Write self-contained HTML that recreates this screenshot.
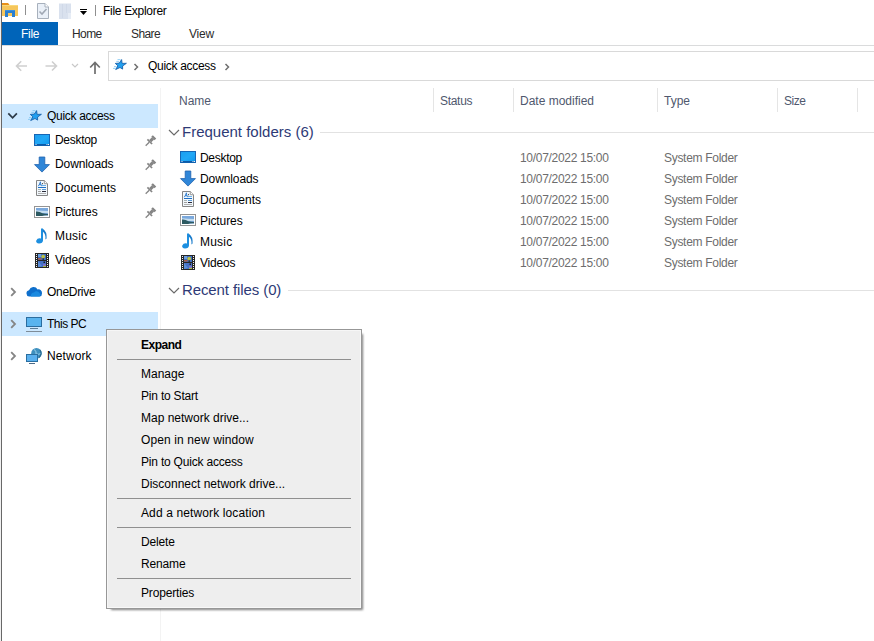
<!DOCTYPE html>
<html><head><meta charset="utf-8">
<style>
html,body{margin:0;padding:0;}
body{width:874px;height:641px;overflow:hidden;position:relative;background:#fff;font-family:"Liberation Sans",sans-serif;font-size:12px;color:#000;}
.a{position:absolute;}
.t{position:absolute;white-space:pre;line-height:14px;}
svg{position:absolute;overflow:visible;}
.hd{color:#4f586e;}
.gr{color:#6d6d6d;letter-spacing:-0.3px;}
.mi{position:absolute;left:141px;white-space:pre;line-height:14px;color:#000;}
.sep{position:absolute;left:117px;width:234px;height:1px;background:#8f8f8f;}
</style></head><body>
<!-- left window border -->
<div class="a" style="left:0;top:0;width:1px;height:641px;background:#f0f0f0"></div>
<div class="a" style="left:1px;top:0;width:1px;height:641px;background:#686868"></div>

<!-- ===== title bar ===== -->
<svg width="18" height="18" style="left:2px;top:2px" viewBox="0 0 18 18">
  <path d="M0 1.5 H6 L7.5 3 H16 V14 H0 Z" fill="#f6c65b"/>
  <path d="M0 1 H6 L7.5 3 H0 Z" fill="#e8901a"/>
  <path d="M0 3 H16 V4 H0 Z" fill="#f9d87a"/>
  <path d="M3 8 H13 V15 H10 V11 H6 V15 H3 Z" fill="#2a7fd0"/>
  <path d="M3 8 H13 V9 H3 Z" fill="#3a90e0"/>
</svg>
<div class="a" style="left:25px;top:5px;width:1px;height:10px;background:#8f8f8f"></div>
<svg width="14" height="17" style="left:36px;top:3px" viewBox="0 0 14 17">
  <path d="M1.5 0.5 H9 L12.5 4 V15.5 H1.5 Z" fill="#eaf0f8" stroke="#a7b0bc" stroke-width="1"/>
  <path d="M9 0.5 V4 H12.5" fill="#fff" stroke="#a7b0bc" stroke-width="1"/>
  <path d="M3.5 8.5 L6 11 L10.5 6" fill="none" stroke="#a0a8b4" stroke-width="1.6"/>
</svg>
<svg width="14" height="17" style="left:58px;top:3px" viewBox="0 0 14 17">
  <rect x="1" y="0.5" width="12" height="15.5" fill="#d9e1ee"/>
  <path d="M4.5 1 V15 M8.5 1 V10" stroke="#d0d9e8" stroke-width="1"/>
  <rect x="10" y="10" width="3" height="6" fill="#e6ecf5"/>
</svg>
<svg width="8" height="7" style="left:80px;top:9px" viewBox="0 0 8 7">
  <rect x="0" y="0" width="7" height="1" fill="#000"/>
  <path d="M0 2 H7 L3.5 6 Z" fill="#000"/>
</svg>
<div class="a" style="left:95px;top:5px;width:1px;height:11px;background:#8f8f8f"></div>
<div class="t" style="left:103px;top:4px;letter-spacing:-0.3px">File Explorer</div>

<!-- ===== ribbon tabs ===== -->
<div class="a" style="left:2px;top:22px;width:56px;height:23px;background:#0064b9"></div>
<div class="t" style="left:21px;top:27px;color:#fff;letter-spacing:-0.3px">File</div>
<div class="t" style="left:72px;top:27px;color:#2b2b2b;letter-spacing:-0.6px">Home</div>
<div class="t" style="left:131px;top:27px;color:#2b2b2b;letter-spacing:-0.6px">Share</div>
<div class="t" style="left:189px;top:27px;color:#2b2b2b;letter-spacing:-0.2px">View</div>
<div class="a" style="left:2px;top:45px;width:872px;height:1px;background:#dadbdc"></div>

<!-- ===== address row ===== -->
<svg width="14" height="12" style="left:15px;top:60px" viewBox="0 0 14 12">
  <path d="M12 6 H2 M6.2 1.3 L1.5 6 L6.2 10.7" fill="none" stroke="#cfcfcf" stroke-width="1.6"/>
</svg>
<svg width="14" height="12" style="left:44px;top:60px" viewBox="0 0 14 12">
  <path d="M1.5 6 H12 M8 1.5 L12.5 6 L8 10.5" fill="none" stroke="#cfcfcf" stroke-width="1.6"/>
</svg>
<svg width="8" height="5" style="left:71px;top:63px" viewBox="0 0 8 5">
  <path d="M1 1 L4 4 L7 1" fill="none" stroke="#c8c8c8" stroke-width="1.2"/>
</svg>
<svg width="12" height="13" style="left:89px;top:61px" viewBox="0 0 12 13">
  <path d="M6 2 V13 M1.2 6.5 L6 1.5 L10.8 6.5" fill="none" stroke="#6f6f6f" stroke-width="1.7"/>
</svg>
<div class="a" style="left:108px;top:51px;width:800px;height:28px;border:1px solid #d9d9d9"></div>
<svg width="17" height="15" style="left:112px;top:57px" viewBox="0 0 17 15">
  <path d="M9.6 2.6 L10.1 6.4 L14.4 6.3 L10.6 9 L10.6 12.1 L8 10.5 L3.7 12.5 L5.9 8.8 L3.3 6.4 L7.3 6.1 Z" fill="#22a0f0" stroke="#1a62aa" stroke-width="0.9" stroke-linejoin="round"/>
  <path d="M5.5 2.6 H8.5 M4.3 4.4 H7 M2 9.6 H4.5 M1 11.4 H3.6" stroke="#7cc4f2" stroke-width="0.8"/>
</svg>
<svg width="6" height="8" style="left:133px;top:63px" viewBox="0 0 6 8">
  <path d="M1.5 1 L4.5 4 L1.5 7" fill="none" stroke="#707070" stroke-width="1.5"/>
</svg>
<div class="t" style="left:148px;top:59px;letter-spacing:-0.3px">Quick access</div>
<svg width="6" height="8" style="left:224px;top:63px" viewBox="0 0 6 8">
  <path d="M1.5 1 L4.5 4 L1.5 7" fill="none" stroke="#707070" stroke-width="1.5"/>
</svg>

<!-- ===== nav pane ===== -->
<div class="a" style="left:2px;top:104px;width:156px;height:24px;background:#cce8ff"></div>
<div class="a" style="left:2px;top:312px;width:156px;height:24px;background:#cce8ff"></div>
<div class="a" style="left:160px;top:88px;width:1px;height:553px;background:#f3f3f3"></div>

<svg width="12" height="8" style="left:7px;top:112px" viewBox="0 0 12 8">
  <path d="M1.3 1.3 L5.6 5.8 L9.9 1.3" fill="none" stroke="#2c3a48" stroke-width="1.7"/>
</svg>
<svg width="17" height="15" style="left:27px;top:108px" viewBox="0 0 17 15">
  <path d="M9.6 2.6 L10.1 6.4 L14.4 6.3 L10.6 9 L10.6 12.1 L8 10.5 L3.7 12.5 L5.9 8.8 L3.3 6.4 L7.3 6.1 Z" fill="#22a0f0" stroke="#1a62aa" stroke-width="0.9" stroke-linejoin="round"/>
  <path d="M5.5 2.6 H8.5 M4.3 4.4 H7 M2 9.6 H4.5 M1 11.4 H3.6" stroke="#7cc4f2" stroke-width="0.8"/>
</svg>
<div class="t" style="left:47px;top:109px;letter-spacing:-0.3px">Quick access</div>

<!-- nav icons (generic via defs) -->
<svg width="0" height="0" style="left:0;top:0">
  <defs>
    <g id="i-desk">
      <linearGradient id="gdesk" x1="0" y1="0" x2="1" y2="1"><stop offset="0" stop-color="#1a9ef0"/><stop offset="0.5" stop-color="#22a8f6"/><stop offset="1" stop-color="#0d96ec"/></linearGradient>
      <rect x="0.5" y="0.5" width="15" height="11" fill="url(#gdesk)" stroke="#1766b5" stroke-width="1"/>
      <rect x="1" y="10" width="14" height="1.5" fill="#0b5aa8"/>
      <rect x="1.5" y="10" width="1" height="1" fill="#e8f4ff"/>
      <rect x="12.5" y="10" width="1" height="1" fill="#e8f4ff"/>
      <rect x="14" y="10" width="1" height="1" fill="#e8f4ff"/>
    </g>
    <g id="i-down">
      <path d="M5.2 0 H10.8 V7.6 H15.5 L8 15.1 L0.5 7.6 H5.2 Z" fill="#2f86d8" stroke="#1f62ad" stroke-width="0.8" stroke-linejoin="round"/>
    </g>
    <g id="i-doc">
      <path d="M0.5 0.5 H8.3 L11.5 3.7 V15.5 H0.5 Z" fill="#f2f8fd" stroke="#858585" stroke-width="1"/>
      <path d="M8.3 0.5 V3.7 H11.5" fill="#fff" stroke="#9a9a9a" stroke-width="1"/>
      <path d="M2.2 6.2 Q3.6 4.6 4.4 1.8 Q4.6 4.5 5.6 6.2 M3 4.7 H5.2" fill="none" stroke="#2a78cc" stroke-width="0.9"/>
      <rect x="6" y="3.2" width="1" height="1" fill="#333"/>
      <rect x="6" y="5" width="4" height="1" fill="#6fb2ea"/>
      <rect x="2" y="7" width="8" height="1" fill="#1f6fc4"/>
      <rect x="2" y="9" width="3" height="1" fill="#a8b4b4"/>
      <rect x="6" y="9" width="4" height="1" fill="#5a9ad8"/>
      <rect x="2" y="11" width="3" height="1" fill="#a0a0a0"/>
      <rect x="6" y="11" width="4" height="1" fill="#2a2a3a"/>
      <rect x="2" y="13" width="8" height="1" fill="#b0b0b0"/>
    </g>
    <g id="i-pic">
      <rect x="0.5" y="0.5" width="15" height="11" fill="#fff" stroke="#949494" stroke-width="1"/>
      <rect x="2" y="2" width="12" height="8" fill="#7aa8dc"/>
      <path d="M2 4.2 Q8 4.6 14 5 V7 H2 Z" fill="#c4ddf0"/>
      <path d="M2 5.6 Q5 5.2 8.5 7.2 Q11 8 14 8 V10 H2 Z" fill="#2d5a62"/>
      <path d="M8 10 Q11 8.6 14 9 V10 Z" fill="#8fb0c8"/>
    </g>
    <g id="i-music">
      <path d="M6 0.5 H8 V12.6 A3.5 2.5 -15 1 1 6 10.4 Z" fill="#1d8fe0"/>
      <path d="M7.8 0.8 Q12.2 3.6 11.6 10.6 L10.4 11.4 Q11 6 7.8 3.6 Z" fill="#1a7ccc"/>
    </g>
    <g id="i-vid">
      <rect x="0" y="0" width="14" height="15" fill="#262626"/>
      <rect x="3" y="1" width="8" height="6" fill="#3f6cc0"/>
      <rect x="3" y="1" width="3" height="3" fill="#6a9ee0"/>
      <circle cx="8.2" cy="3.6" r="1.9" fill="#b9c045"/>
      <rect x="3" y="5" width="3.5" height="1.6" fill="#a65a48"/>
      <rect x="7.5" y="5.4" width="1.5" height="1.4" fill="#222"/>
      <rect x="3" y="8" width="8" height="6" fill="#4670c4"/>
      <path d="M3 8 L7 13 L3 14 Z" fill="#5b8ed8"/>
      <rect x="8.5" y="8.5" width="1.5" height="1.5" fill="#1a1a1a"/>
      <rect x="8" y="11" width="3" height="3" fill="#7d72c6"/>
      <rect x="8" y="13" width="3" height="1" fill="#a8c040"/>
      <g fill="#f4f4f4">
        <rect x="1" y="1" width="1" height="1"/><rect x="1" y="3" width="1" height="1"/><rect x="1" y="5" width="1" height="1"/><rect x="1" y="7" width="1" height="1"/><rect x="1" y="9" width="1" height="1"/><rect x="1" y="11" width="1" height="1"/><rect x="1" y="13" width="1" height="1"/>
        <rect x="12" y="1" width="1" height="1"/><rect x="12" y="3" width="1" height="1"/><rect x="12" y="5" width="1" height="1"/><rect x="12" y="7" width="1" height="1"/><rect x="12" y="9" width="1" height="1"/><rect x="12" y="11" width="1" height="1"/><rect x="12" y="13" width="1" height="1"/>
      </g>
    </g>
    <g id="i-pin">
      <g transform="translate(5 5.4) rotate(45)" fill="#858585">
        <rect x="-2.4" y="-6.4" width="4.8" height="2.2"/>
        <rect x="-1.5" y="-4.3" width="3" height="3.9"/>
        <rect x="-3.3" y="-0.5" width="6.6" height="1.7"/>
        <rect x="-0.65" y="1.1" width="1.3" height="5"/>
      </g>
    </g>
    <g id="i-chev">
      <path d="M1.2 1.2 L5 5 L1.2 8.8" fill="none" stroke="#858585" stroke-width="1.8"/>
    </g>
  </defs>
</svg>

<svg width="16" height="12" style="left:34px;top:134px"><use href="#i-desk"/></svg>
<svg width="16" height="16" style="left:34px;top:157px"><use href="#i-down"/></svg>
<svg width="12" height="16" style="left:36px;top:180px"><use href="#i-doc"/></svg>
<svg width="16" height="12" style="left:34px;top:206px"><use href="#i-pic"/></svg>
<svg width="12" height="16" style="left:35px;top:228px"><use href="#i-music"/></svg>
<svg width="14" height="15" style="left:35px;top:253px"><use href="#i-vid"/></svg>

<svg width="11" height="11" style="left:145px;top:136px"><use href="#i-pin"/></svg>
<svg width="11" height="11" style="left:145px;top:160px"><use href="#i-pin"/></svg>
<svg width="11" height="11" style="left:145px;top:184px"><use href="#i-pin"/></svg>
<svg width="11" height="11" style="left:145px;top:208px"><use href="#i-pin"/></svg>

<div class="t" style="left:55px;top:133px;letter-spacing:-0.3px">Desktop</div>
<div class="t" style="left:55px;top:157px;letter-spacing:-0.1px">Downloads</div>
<div class="t" style="left:55px;top:181px;letter-spacing:0.05px">Documents</div>
<div class="t" style="left:55px;top:205px;letter-spacing:-0.1px">Pictures</div>
<div class="t" style="left:55px;top:229px;letter-spacing:0.2px">Music</div>
<div class="t" style="left:55px;top:253px;letter-spacing:-0.2px">Videos</div>

<svg width="8" height="10" style="left:10px;top:287px"><use href="#i-chev"/></svg>
<svg width="17" height="11" style="left:26px;top:286px" viewBox="0 0 17 11">
  <path d="M3.2 10.5 A3.2 3.2 0 0 1 3 4.2 A4.8 4.8 0 0 1 11.6 3.4 A3.6 3.6 0 0 1 16 7.4 A3 3 0 0 1 13.6 10.5 Z" fill="#0e6fcc"/>
  <path d="M5 10.5 A3 3 0 0 1 8 6.5 A3.2 3.2 0 0 1 13.4 7 A2.4 2.4 0 0 1 13.6 10.5 Z" fill="#1a8ae0"/>
</svg>
<div class="t" style="left:47px;top:285px;letter-spacing:-0.3px">OneDrive</div>

<svg width="8" height="10" style="left:10px;top:319px"><use href="#i-chev"/></svg>
<svg width="17" height="16" style="left:26px;top:317px" viewBox="0 0 17 16">
  <rect x="0.5" y="0.5" width="15" height="9" fill="#59b4ef" stroke="#2b6d9f" stroke-width="1"/>
  <rect x="4" y="11" width="8" height="1" fill="#5a7c96"/>
  <rect x="0" y="14" width="16" height="1" fill="#7e8c98"/>
</svg>
<div class="t" style="left:47px;top:317px;letter-spacing:-0.5px">This PC</div>

<svg width="8" height="10" style="left:10px;top:351px"><use href="#i-chev"/></svg>
<svg width="17" height="17" style="left:26px;top:347px" viewBox="0 0 17 17">
  <circle cx="10.5" cy="6.3" r="5.3" fill="#3f90bf"/>
  <path d="M8 2.5 Q11 4 10 7 Q13 8 15.5 6" fill="none" stroke="#9ad0ec" stroke-width="1"/>
  <path d="M14 3 Q16.5 7 13 10.5" fill="none" stroke="#2a6a90" stroke-width="1.2"/>
  <rect x="0.5" y="7.5" width="11" height="7" fill="#5ab0ee" stroke="#2a6ea0" stroke-width="1"/>
  <rect x="3" y="16" width="6" height="1" fill="#4a6a88"/>
</svg>
<div class="t" style="left:47px;top:349px;letter-spacing:0.1px">Network</div>

<!-- ===== column headers ===== -->
<div class="t hd" style="left:179px;top:94px">Name</div>
<div class="t hd" style="left:440px;top:94px;letter-spacing:-0.3px">Status</div>
<div class="t hd" style="left:520px;top:94px">Date modified</div>
<div class="t hd" style="left:664px;top:94px">Type</div>
<div class="t hd" style="left:784px;top:94px;letter-spacing:-0.5px">Size</div>
<div class="a" style="left:433px;top:88px;width:1px;height:24px;background:#e5e5e5"></div>
<div class="a" style="left:513px;top:88px;width:1px;height:24px;background:#e5e5e5"></div>
<div class="a" style="left:657px;top:88px;width:1px;height:24px;background:#e5e5e5"></div>
<div class="a" style="left:777px;top:88px;width:1px;height:24px;background:#e5e5e5"></div>
<div class="a" style="left:857px;top:88px;width:1px;height:24px;background:#e5e5e5"></div>

<!-- ===== groups ===== -->
<svg width="12" height="7" style="left:167.5px;top:128.5px" viewBox="0 0 12 7">
  <path d="M1 1 L6 6 L11 1" fill="none" stroke="#6a6a6a" stroke-width="1.2"/>
</svg>
<div class="t" style="left:182px;top:123px;font-size:15px;line-height:17px;color:#2e3a76;letter-spacing:0px">Frequent folders (6)</div>
<div class="a" style="left:320px;top:132px;width:554px;height:1px;background:#e2e2e2"></div>
<svg width="12" height="7" style="left:167.5px;top:286.5px" viewBox="0 0 12 7">
  <path d="M1 1 L6 6 L11 1" fill="none" stroke="#6a6a6a" stroke-width="1.2"/>
</svg>
<div class="t" style="left:182px;top:281px;font-size:15px;line-height:17px;color:#2e3a76;letter-spacing:-0.1px">Recent files (0)</div>
<div class="a" style="left:288px;top:290px;width:586px;height:1px;background:#e2e2e2"></div>

<!-- rows -->
<svg width="16" height="12" style="left:180px;top:151px"><use href="#i-desk"/></svg>
<svg width="16" height="16" style="left:180px;top:171px"><use href="#i-down"/></svg>
<svg width="12" height="16" style="left:182px;top:191px"><use href="#i-doc"/></svg>
<svg width="16" height="12" style="left:180px;top:214px"><use href="#i-pic"/></svg>
<svg width="12" height="16" style="left:181px;top:233px"><use href="#i-music"/></svg>
<svg width="14" height="15" style="left:181px;top:255px"><use href="#i-vid"/></svg>

<div class="t" style="left:200px;top:151px;letter-spacing:-0.3px">Desktop</div>
<div class="t" style="left:200px;top:172px;letter-spacing:-0.1px">Downloads</div>
<div class="t" style="left:200px;top:193px;letter-spacing:0.05px">Documents</div>
<div class="t" style="left:200px;top:214px;letter-spacing:-0.1px">Pictures</div>
<div class="t" style="left:200px;top:235px;letter-spacing:0.2px">Music</div>
<div class="t" style="left:200px;top:256px;letter-spacing:-0.2px">Videos</div>

<div class="t gr" style="left:520px;top:151px">10/07/2022 15:00</div>
<div class="t gr" style="left:520px;top:172px">10/07/2022 15:00</div>
<div class="t gr" style="left:520px;top:193px">10/07/2022 15:00</div>
<div class="t gr" style="left:520px;top:214px">10/07/2022 15:00</div>
<div class="t gr" style="left:520px;top:235px">10/07/2022 15:00</div>
<div class="t gr" style="left:520px;top:256px">10/07/2022 15:00</div>
<div class="t gr" style="left:664px;top:151px">System Folder</div>
<div class="t gr" style="left:664px;top:172px">System Folder</div>
<div class="t gr" style="left:664px;top:193px">System Folder</div>
<div class="t gr" style="left:664px;top:214px">System Folder</div>
<div class="t gr" style="left:664px;top:235px">System Folder</div>
<div class="t gr" style="left:664px;top:256px">System Folder</div>

<!-- ===== context menu ===== -->
<div class="a" style="left:111px;top:334px;width:252px;height:276px;background:rgba(0,0,0,0.5);filter:blur(1.3px)"></div>
<div class="a" style="left:106px;top:329px;width:254px;height:278px;border:1px solid #979797;background:#eeeeee;box-shadow:inset 1px 1px 0 #f6f6f6, inset -1px -1px 0 #f8f8f8"></div>
<div class="mi" style="top:338px;font-weight:bold;letter-spacing:-0.5px">Expand</div>
<div class="sep" style="top:359px"></div>
<div class="mi" style="top:367px">Manage</div>
<div class="mi" style="top:389px;letter-spacing:-0.2px">Pin to Start</div>
<div class="mi" style="top:411px">Map network drive...</div>
<div class="mi" style="top:433px;letter-spacing:0.12px">Open in new window</div>
<div class="mi" style="top:455px;letter-spacing:-0.2px">Pin to Quick access</div>
<div class="mi" style="top:477px">Disconnect network drive...</div>
<div class="sep" style="top:498px"></div>
<div class="mi" style="top:506px;letter-spacing:0.12px">Add a network location</div>
<div class="sep" style="top:527px"></div>
<div class="mi" style="top:535px;letter-spacing:-0.15px">Delete</div>
<div class="mi" style="top:557px;letter-spacing:-0.15px">Rename</div>
<div class="sep" style="top:578px"></div>
<div class="mi" style="top:586px;letter-spacing:-0.15px">Properties</div>
</body></html>
